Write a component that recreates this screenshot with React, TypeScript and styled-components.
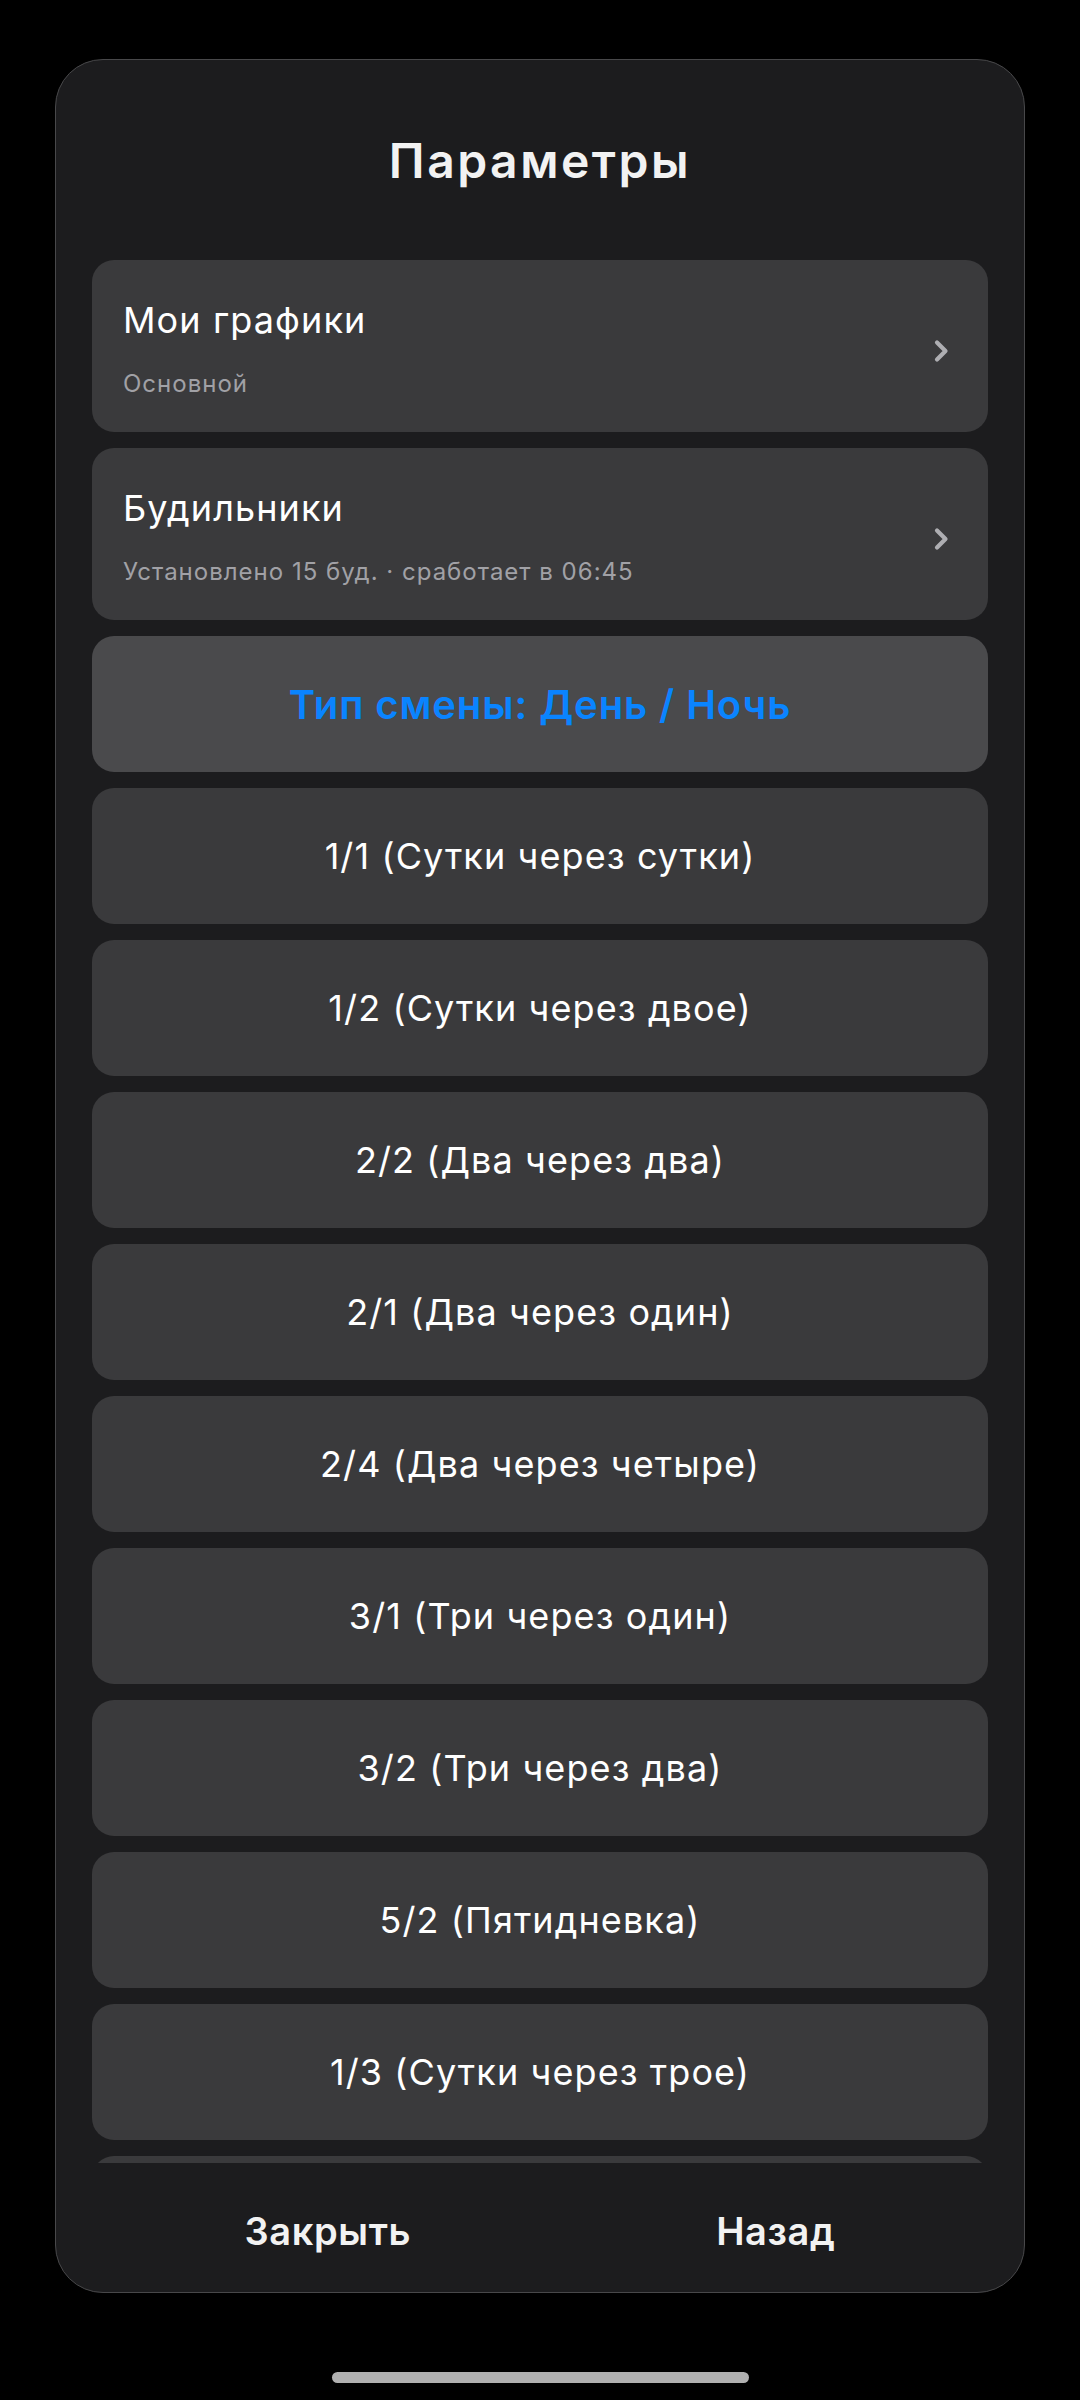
import styled, { createGlobalStyle } from "styled-components";

// css
const GlobalStyle = createGlobalStyle`
  html, body {
    margin: 0;
    padding: 0;
    background-color: #000000;
  }
  * {
    box-sizing: border-box;
  }
`;

const Screen = styled.div`
  width: 1080px;
  height: 2400px;
  background-color: #000000;
  display: flex;
  flex-direction: column;
  align-items: center;
  font-family: Inter, "Noto Sans", "Liberation Sans", sans-serif;
  overflow: hidden;
`;

const Sheet = styled.div`
  margin-top: 59px;
  width: 970px;
  height: 2234px;
  background-color: #1c1c1e;
  border: 1px solid #48484a;
  border-radius: 48px;
  display: flex;
  flex-direction: column;
  overflow: hidden;
`;

const Header = styled.div`
  height: 200px;
  flex-shrink: 0;
  display: flex;
  align-items: center;
  justify-content: center;
`;

const Title = styled.h1`
  margin: 0;
  font-size: 48px;
  font-weight: 600;
  color: #f2f2f2;
  letter-spacing: 2.5px;
`;

const List = styled.div`
  flex: 1;
  min-height: 0;
  overflow: hidden;
  padding: 0 36px;
  display: flex;
  flex-direction: column;
  gap: 16px;
`;

const NavCard = styled.div`
  flex-shrink: 0;
  height: 172px;
  background-color: #3a3a3c;
  border-radius: 22px;
  padding: 38px 39px 0 31px;
  display: flex;
  flex-direction: row;
  align-items: center;
`;

const NavText = styled.div`
  flex: 1;
  align-self: flex-start;
  display: flex;
  flex-direction: column;
  gap: 27px;
`;

const NavTitle = styled.span`
  font-size: 36px;
  line-height: 44px;
  letter-spacing: 1.1px;
  color: #ffffff;
`;

const NavSub = styled.span`
  font-size: 24px;
  line-height: 29px;
  letter-spacing: 1px;
  color: #a1a1a6;
`;

const Chevron = styled.svg`
  width: 15px;
  height: 24px;
  margin-top: -28px;
  flex-shrink: 0;
`;

const Option = styled.div<{ $active?: boolean }>`
  flex-shrink: 0;
  height: 136px;
  border-radius: 22px;
  background-color: ${(p) => (p.$active ? "#4a4a4c" : "#3a3a3c")};
  color: ${(p) => (p.$active ? "#0a84ff" : "#ffffff")};
  font-size: ${(p) => (p.$active ? "40px" : "36px")};
  font-weight: ${(p) => (p.$active ? 600 : 400)};
  letter-spacing: ${(p) => (p.$active ? "0.9px" : "1.1px")};
  display: flex;
  align-items: center;
  justify-content: center;
`;

const Footer = styled.div`
  height: 129px;
  flex-shrink: 0;
  padding: 7px 36px 0;
  display: flex;
  align-items: center;
  justify-content: space-around;
`;

const FooterButton = styled.button`
  border: none;
  background: none;
  padding: 0;
  font-family: inherit;
  font-size: 38px;
  font-weight: 600;
  letter-spacing: 0.6px;
  color: #f2f2f2;
  cursor: pointer;
`;

const HomeBar = styled.div`
  margin-top: 79px;
  width: 417px;
  height: 11px;
  border-radius: 6px;
  background-color: #b0b0b0;
`;

const schedules = [
  "1/1 (Сутки через сутки)",
  "1/2 (Сутки через двое)",
  "2/2 (Два через два)",
  "2/1 (Два через один)",
  "2/4 (Два через четыре)",
  "3/1 (Три через один)",
  "3/2 (Три через два)",
  "5/2 (Пятидневка)",
  "1/3 (Сутки через трое)",
];

function Arrow() {
  return (
    <Chevron viewBox="0 0 15 24">
      <polyline
        points="3,3.5 11.5,12 3,20.5"
        fill="none"
        stroke="#aeaeb2"
        strokeWidth="4.2"
        strokeLinecap="round"
        strokeLinejoin="round"
      />
    </Chevron>
  );
}

function App() {
  return (
    <Screen>
      <GlobalStyle />
      <Sheet>
        <Header>
          <Title>Параметры</Title>
        </Header>
        <List>
          <NavCard>
            <NavText>
              <NavTitle>Мои графики</NavTitle>
              <NavSub>Основной</NavSub>
            </NavText>
            <Arrow />
          </NavCard>
          <NavCard>
            <NavText>
              <NavTitle>Будильники</NavTitle>
              <NavSub>Установлено 15 буд. · сработает в 06:45</NavSub>
            </NavText>
            <Arrow />
          </NavCard>
          <Option $active>Тип смены: День / Ночь</Option>
          {schedules.map((s) => (
            <Option key={s}>{s}</Option>
          ))}
          {/* next item, scrolled below the footer */}
          <Option />
        </List>
        <Footer>
          <FooterButton>Закрыть</FooterButton>
          <FooterButton>Назад</FooterButton>
        </Footer>
      </Sheet>
      <HomeBar />
    </Screen>
  );
}

export default App;
